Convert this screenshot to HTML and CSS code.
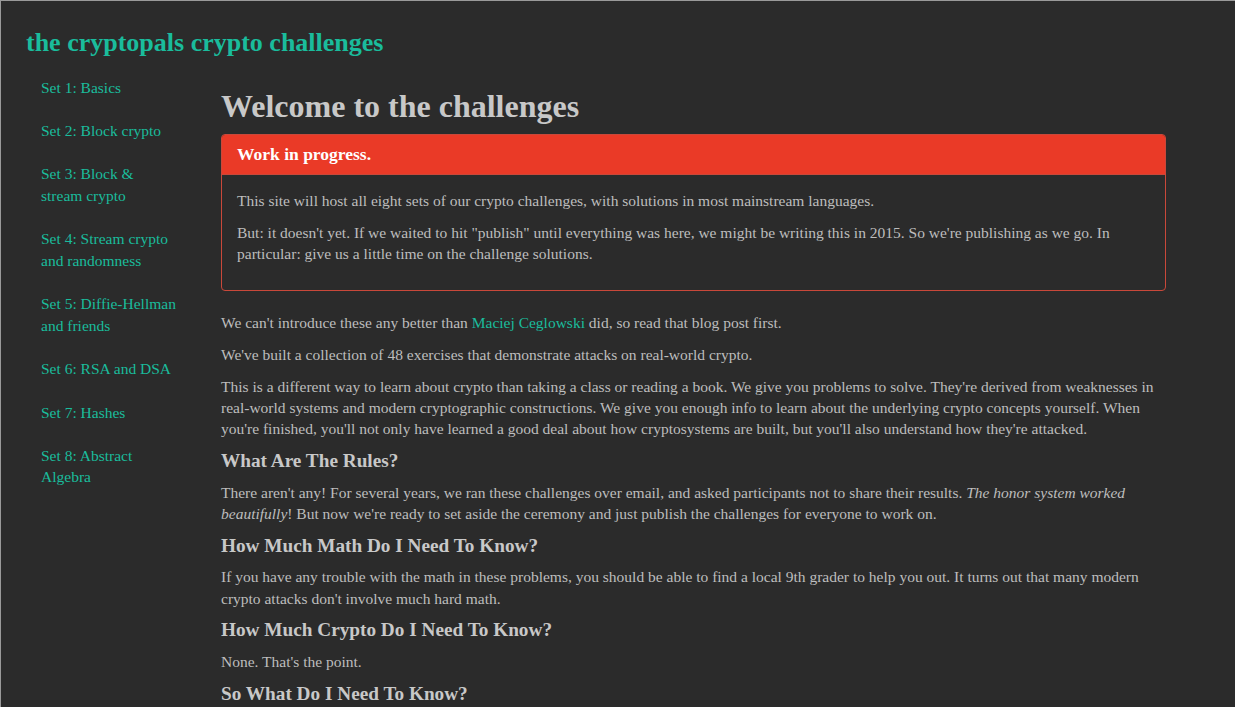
FILE: index.html
```html
<!DOCTYPE html>
<html lang="en">
<head>
<meta charset="utf-8">
<title>the cryptopals crypto challenges</title>
<link rel="stylesheet" href="styles.css">
</head>
<body>
<div class="page">
  <header class="site-header">
    <h1 class="site-title"><a href="#">the cryptopals crypto challenges</a></h1>
  </header>
  <div class="layout">
    <nav class="sidebar">
      <ul class="nav">
        <li><a href="#">Set 1: Basics</a></li>
        <li><a href="#">Set 2: Block crypto</a></li>
        <li><a href="#">Set 3: Block &amp; stream crypto</a></li>
        <li><a href="#">Set 4: Stream crypto and randomness</a></li>
        <li><a href="#">Set 5: Diffie-Hellman and friends</a></li>
        <li><a href="#">Set 6: RSA and DSA</a></li>
        <li><a href="#">Set 7: Hashes</a></li>
        <li><a href="#">Set 8: Abstract Algebra</a></li>
      </ul>
    </nav>
    <main class="content">
      <h1 class="page-title">Welcome to the challenges</h1>
      <div class="panel">
        <div class="panel-heading"><h3 class="panel-title">Work in progress.</h3></div>
        <div class="panel-body">
          <p>This site will host all eight sets of our crypto challenges, with solutions in most mainstream languages.</p>
          <p>But: it doesn't yet. If we waited to hit "publish" until everything was here, we might be writing this in 2015. So we're publishing as we go. In particular: give us a little time on the challenge solutions.</p>
        </div>
      </div>
      <p>We can't introduce these any better than <a href="#">Maciej Ceglowski</a> did, so read that blog post first.</p>
      <p>We've built a collection of 48 exercises that demonstrate attacks on real-world crypto.</p>
      <p>This is a different way to learn about crypto than taking a class or reading a book. We give you problems to solve. They're derived from weaknesses in real-world systems and modern cryptographic constructions. We give you enough info to learn about the underlying crypto concepts yourself. When you're finished, you'll not only have learned a good deal about how cryptosystems are built, but you'll also understand how they're attacked.</p>
      <h3>What Are The Rules?</h3>
      <p>There aren't any! For several years, we ran these challenges over email, and asked participants not to share their results. <em>The honor system worked beautifully</em>! But now we're ready to set aside the ceremony and just publish the challenges for everyone to work on.</p>
      <h3>How Much Math Do I Need To Know?</h3>
      <p>If you have any trouble with the math in these problems, you should be able to find a local 9th grader to help you out. It turns out that many modern crypto attacks don't involve much hard math.</p>
      <h3>How Much Crypto Do I Need To Know?</h3>
      <p>None. That's the point.</p>
      <h3>So What Do I Need To Know?</h3>
      <p>You'll want to be able to code proficiently in any language. We've received submissions in C, C++, Python, Ruby, Perl, Visual Basic, X86 Assembly, Haskell, and Lisp. Surprise us with another language. Our friend Maciej says these challenges are a good way to learn a new language, so maybe now's the time to pick up Clojure or Rust.</p>
    </main>
  </div>
</div>
</body>
</html>
```

FILE: styles.css
```css
html, body {
  margin: 0;
  padding: 0;
}
body {
  background: #2b2b2b;
  color: #bdbdbd;
  font-family: "Liberation Serif", "Times New Roman", serif;
  font-size: 15.5px;
  line-height: 21.3px;
  border-top: 1px solid #9a9a9a;
  border-left: 1px solid #9a9a9a;
  min-height: 706px;
  box-sizing: border-box;
}
a {
  color: #1abc9c;
  text-decoration: none;
}
.page {
  padding: 0 0 0 25px;
}
.site-header {
  padding-top: 28px;
}
.site-title {
  margin: 0;
  font-size: 26px;
  line-height: 1.1;
  font-weight: bold;
}
.layout {
  display: flex;
  align-items: flex-start;
  margin-top: 7px;
}
.sidebar {
  width: 165px;
  flex: none;
  margin-right: 30px;
}
.nav {
  list-style: none;
  margin: 0;
  padding: 0;
}
.nav li {
  margin-top: 2px;
}
.nav a {
  display: block;
  padding: 10px 15px;
  line-height: 21.43px;
}
.content {
  width: 945px;
  flex: none;
}
.page-title {
  margin: 24px 0 10px;
  font-size: 32px;
  line-height: 1.1;
  font-weight: bold;
  color: #c8c8c8;
}
.panel {
  border: 1px solid #c9483a;
  border-radius: 4px;
  margin-bottom: 21px;
}
.panel-heading {
  background: #ea3a27;
  border-bottom: 1px solid #c9483a;
  border-radius: 3px 3px 0 0;
  padding: 10px 15px;
}
.panel-title {
  margin: 0;
  font-size: 17.5px;
  line-height: 1.1;
  color: #fff;
}
.panel-body {
  padding: 15px;
}
p {
  margin: 0 0 10.5px;
}
h3 {
  margin: 10px 0 10.5px;
  font-size: 19.25px;
  line-height: 1.1;
  font-weight: bold;
  color: #c8c8c8;
}
```
